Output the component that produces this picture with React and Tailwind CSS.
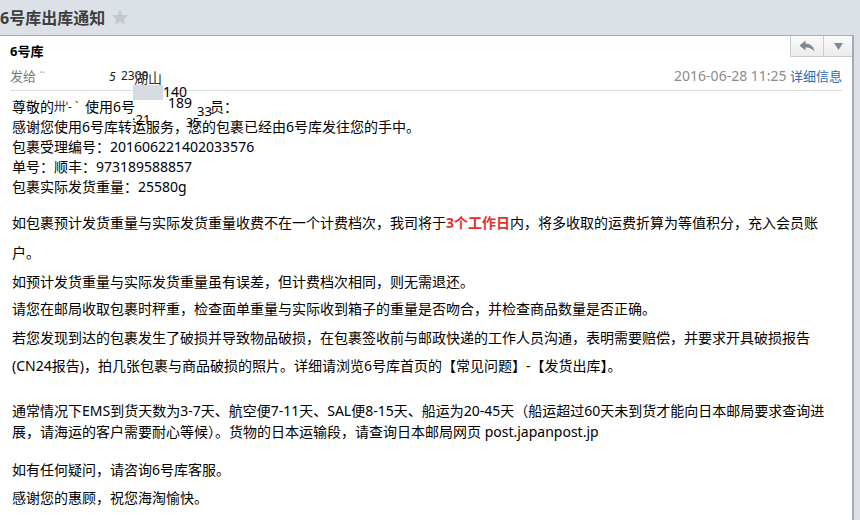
import React from 'react';

const font = { fontFamily: '"Noto Sans", "Noto Sans CJK SC", sans-serif' };

const ReplyIcon = () => (
  <svg width="16" height="12" viewBox="0 0 16 12">
    <path d="M6.5 0.5 L0.5 5.5 L6.5 10.5 V7.5 C10 7.3 12.8 8.6 15.5 11.5 C14.5 6.5 11.5 3.8 6.5 3.6 Z" fill="#7f8a93" />
  </svg>
);

const Caret = () => (
  <svg width="9" height="7" viewBox="0 0 9 7">
    <path d="M0 0 H9 L4.5 7 Z" fill="#7f8a93" />
  </svg>
);

const Star = () => (
  <svg width="18" height="17" viewBox="0 0 24 23">
    <path d="M12 0.8 L15.1 8 L22.9 8.6 L17 13.8 L18.8 21.5 L12 17.4 L5.2 21.5 L7 13.8 L1.1 8.6 L8.9 8 Z" fill="#c3c8ce" />
  </svg>
);

export default function App() {
  return (
    <div className="w-[860px] h-[520px] bg-[#dce1e8] overflow-hidden text-black" style={font}>
      {/* title bar */}
      <div className="h-[35px] flex items-center gap-[6px]">
        <span className="text-[16px] font-bold text-[#3d3d3d] leading-none">6号库出库通知</span>
        <Star />
      </div>

      {/* mail card */}
      <div className="relative w-[854px] h-[485px] bg-white border-t border-t-[#a9aeb4] border-r-2 border-r-[#a5abb2]">
        <div className="flex justify-between">
          <div className="pl-[10px] pt-[6px] text-[13px] font-bold leading-[18px]">6号库</div>
          <div className="flex h-[21px]">
            <div className="w-[33px] flex items-center justify-center bg-gradient-to-b from-[#fbfbfb] to-[#ececec] border-l border-b border-[#c9ccd0]">
              <ReplyIcon />
            </div>
            <div className="w-[29px] flex items-center justify-center bg-gradient-to-b from-[#fbfbfb] to-[#ececec] border-l border-b border-[#c9ccd0]">
              <Caret />
            </div>
          </div>
        </div>

        <div className="mx-[10px] mt-[7px] flex justify-between items-center text-[13px] leading-[18px]">
          <span className="text-[#7a7a7a]">发给 <span className="text-[9px] align-top">``</span></span>
          <span>
            <span className="text-[14px] text-[#8c8c8c]">2016-06-28 11:25</span>{' '}
            <span className="text-[#2f6db5]">详细信息</span>
          </span>
        </div>

        <div className="mx-[10px] mt-[5px] border-t border-[#dedede]" />

        {/* body */}
        <div className="pl-[12px] pt-[6px] text-[14px] whitespace-nowrap">
          <div className="h-[20px] leading-[20px] flex">
            <span>尊敬的</span>
            <span className="w-[31px] text-[12px] text-[#333]">卅ˈ- ˋ</span>
            <span>使用6号</span>
            <span className="w-[75px]" />
            <span>员：</span>
          </div>
          <div className="h-[20px] leading-[20px]">感谢您使用6号库转运服务，您的包裹已经由6号库发往您的手中。</div>
          <div className="h-[20px] leading-[20px]">包裹受理编号：201606221402033576</div>
          <div className="h-[20px] leading-[20px]">单号：顺丰：973189588857</div>
          <div className="h-[20px] leading-[20px]">包裹实际发货重量：25580g</div>

          <div className="mt-[11px] h-[30px] leading-[30px]">
            如包裹预计发货重量与实际发货重量收费不在一个计费档次，我司将于<span className="font-bold text-[#e3302f]">3个工作日</span>内，将多收取的运费折算为等值积分，充入会员账
          </div>
          <div className="h-[30px] leading-[30px]">户。</div>
          <div className="h-[27px] leading-[27px]">如预计发货重量与实际发货重量虽有误差，但计费档次相同，则无需退还。</div>
          <div className="h-[27px] leading-[27px]">请您在邮局收取包裹时秤重，检查面单重量与实际收到箱子的重量是否吻合，并检查商品数量是否正确。</div>
          <div className="mt-[2px] h-[28px] leading-[28px]">若您发现到达的包裹发生了破损并导致物品破损，在包裹签收前与邮政快递的工作人员沟通，表明需要赔偿，并要求开具破损报告</div>
          <div className="h-[28px] leading-[28px]">(CN24报告)，拍几张包裹与商品破损的照片。详细请浏览6号库首页的【常见问题】-【发货出库】。</div>

          <div className="mt-[20px] h-[21px] leading-[21px]">通常情况下EMS到货天数为3-7天、航空便7-11天、SAL便8-15天、船运为20-45天（船运超过60天未到货才能向日本邮局要求查询进</div>
          <div className="h-[21px] leading-[21px]">展，请海运的客户需要耐心等候）。货物的日本运输段，请查询日本邮局网页 post.japanpost.jp</div>

          <div className="mt-[14px] h-[28px] leading-[28px]">如有任何疑问，请咨询6号库客服。</div>
          <div className="h-[28px] leading-[28px]">感谢您的惠顾，祝您海淘愉快。</div>
        </div>

        {/* redaction leftovers */}
        <span className="absolute left-[109px] top-[33px] text-[12px] leading-[16px] italic text-[#222]">5</span>
        <span className="absolute left-[121px] top-[32px] text-[12px] leading-[16px] text-[#222]">2300</span>
        <span className="absolute left-[134px] top-[33px] text-[14px] leading-[18px] text-[#333]">湖山</span>
        <span className="absolute left-[133px] top-[49px] w-[30px] h-[15px] bg-[#d6dbe0]" />
        <span className="absolute left-[163px] top-[47px] text-[14px] leading-[18px]">140</span>
        <span className="absolute left-[168px] top-[58px] text-[14px] leading-[18px]">189</span>
        <span className="absolute left-[197px] top-[67px] text-[13px] leading-[16px]">33</span>
        <span className="absolute left-[132px] top-[75px] text-[13px] leading-[16px]">·21</span>
        <span className="absolute left-[186px] top-[80px] text-[12px] leading-[14px]">35</span>
      </div>
    </div>
  );
}
